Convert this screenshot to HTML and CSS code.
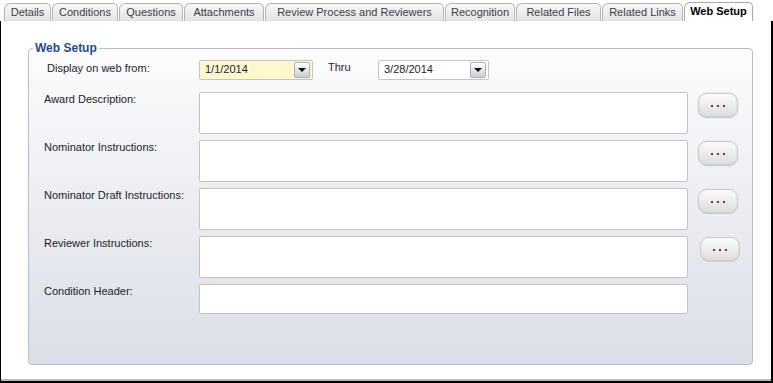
FILE: index.html
```html
<!DOCTYPE html>
<html lang="en">
    <head>
        <meta charset="UTF-8" />
        <meta name="viewport" content="width=device-width, initial-scale=1.0" />
        <title>Web Setup</title>
        <link rel="stylesheet" href="styles.css">
    </head>

    <body>
        <div class="window">
            <ul class="tabs">
                <li class="tab">Details</li>
                <li class="tab">Conditions</li>
                <li class="tab">Questions</li>
                <li class="tab">Attachments</li>
                <li class="tab">Review Process and Reviewers</li>
                <li class="tab">Recognition</li>
                <li class="tab">Related Files</li>
                <li class="tab">Related Links</li>
                <li class="tab active">Web Setup</li>
            </ul>

            <div class="panel">
                <fieldset class="group">
                    <legend>Web Setup</legend>

                    <div class="date-row">
                        <label class="date-label">Display on web from:</label>
                        <div class="combo combo-from">
                            <span class="combo-text">1/1/2014</span>
                            <span class="combo-btn"><i></i></span>
                        </div>
                        <span class="thru">Thru</span>
                        <div class="combo combo-to">
                            <span class="combo-text">3/28/2014</span>
                            <span class="combo-btn"><i></i></span>
                        </div>
                    </div>

                    <div class="form-grid">
                        <label class="field-label">Award Description:</label>
                        <div class="memo"></div>
                        <button class="ellipsis"><span></span><span></span><span></span></button>

                        <label class="field-label">Nominator Instructions:</label>
                        <div class="memo"></div>
                        <button class="ellipsis"><span></span><span></span><span></span></button>

                        <label class="field-label">Nominator Draft Instructions:</label>
                        <div class="memo"></div>
                        <button class="ellipsis"><span></span><span></span><span></span></button>

                        <label class="field-label">Reviewer Instructions:</label>
                        <div class="memo"></div>
                        <button class="ellipsis ellipsis-shift"><span></span><span></span><span></span></button>

                        <label class="field-label">Condition Header:</label>
                        <div class="memo memo-short"></div>
                        <div></div>
                    </div>
                </fieldset>
            </div>
        </div>
    </body>
</html>
```
FILE: styles.css
```css
html,
body {
    margin: 0;
    padding: 0;
    overflow: hidden;
    background: #fff;
}

body {
    font: 11px/13px "Liberation Sans", Arial, sans-serif;
    color: #1c1c2c;
}

.window {
    width: 773px;
    height: 383px;
    display: flex;
    flex-direction: column;
}

/* tab strip */
.tabs {
    list-style: none;
    margin: 0;
    padding: 2px 0 0 4px;
    height: 19px;
    display: flex;
    align-items: flex-end;
    gap: 1px;
}

.tab {
    height: 17px;
    line-height: 17px;
    box-sizing: content-box;
    text-align: center;
    color: #3c3c46;
    background: linear-gradient(#f7f7f7, #e4e4e6);
    border: 1px solid #b4b4b8;
    border-bottom: none;
    border-radius: 6px 5px 0 0;
    white-space: nowrap;
}

/* tab widths taken from the strip */
.tab:nth-child(1) { width: 45px; }
.tab:nth-child(2) { width: 64px; }
.tab:nth-child(3) { width: 62px; }
.tab:nth-child(4) { width: 78px; }
.tab:nth-child(5) { width: 177px; }
.tab:nth-child(6) { width: 68px; }
.tab:nth-child(7) { width: 83px; }
.tab:nth-child(8) { width: 79px; }
.tab:nth-child(9) { width: 67px; }

.tab.active {
    height: 18px;
    color: #000;
    font-weight: bold;
    background: #fff;
    border-color: #a8a8b0;
}

/* main panel */
.panel {
    flex: 1;
    background: #fff;
    border-left: 1px solid #000;
    border-right: 2px solid #000;
    border-bottom: 2px solid #000;
    box-shadow: inset 0 -2px 0 #b8b8b8;
    padding: 20px 0 0 27px;
}

.group {
    width: 725px;
    height: 324px;
    box-sizing: border-box;
    margin: 0;
    padding: 4px 0 0 0;
    border: 1px solid #b8bcc4;
    border-radius: 4px;
    background: linear-gradient(#fcfcfd, #dadee7);
}

.group legend {
    margin-left: 4px;
    padding: 0 2px;
    font: bold 12px/14px "Liberation Sans", Arial, sans-serif;
    color: #1f4b8a;
}

/* date row */
.date-row {
    display: flex;
    align-items: center;
    height: 21px;
}

.date-label {
    width: 152px;
    padding-left: 18px;
    margin-top: -3px;
}

.combo {
    height: 20px;
    box-sizing: border-box;
    border: 1px solid #c4c4c4;
    border-radius: 2px;
    display: flex;
    align-items: center;
    justify-content: space-between;
    background: #fff;
}

.combo-from {
    width: 114px;
    background: #fff8cf;
}

.combo-to {
    width: 111px;
}

.combo-text {
    padding-left: 5px;
}

.combo-btn {
    width: 16px;
    height: 16px;
    margin-right: 2px;
    box-sizing: border-box;
    border: 1px solid #a9b0bc;
    border-radius: 2px;
    background: linear-gradient(#ffffff, #c9cdd6);
    display: flex;
    align-items: center;
    justify-content: center;
}

.combo-btn i {
    width: 0;
    height: 0;
    border-left: 4px solid transparent;
    border-right: 4px solid transparent;
    border-top: 4px solid #111;
}

.thru {
    width: 65px;
    padding-left: 15px;
    box-sizing: border-box;
    margin-top: -5px;
}

/* memo rows */
.form-grid {
    margin-top: 12px;
    display: grid;
    grid-template-columns: 170px 489px 50px;
    row-gap: 6px;
}

.field-label {
    padding: 1px 0 0 15px;
}

.memo {
    height: 42px;
    box-sizing: border-box;
    background: #fff;
    border: 1px solid #c2c2c6;
    border-radius: 2px;
}

.memo-short {
    height: 30px;
}

.ellipsis {
    margin: 1px 0 0 10px;
    width: 40px;
    height: 25px;
    padding: 0;
    border: 1px solid #c8c8cc;
    border-radius: 9px;
    background: linear-gradient(#fbfbfb, #dcdcde);
    box-shadow: 0 0 0 1px #ececee, inset 0 -1px 0 #cfcfd2;
    display: flex;
    align-items: center;
    justify-content: center;
    gap: 4px;
}

.ellipsis span {
    width: 2px;
    height: 2px;
    background: #7a2c4a;
}

.ellipsis-shift {
    margin-left: 12px;
}
```
